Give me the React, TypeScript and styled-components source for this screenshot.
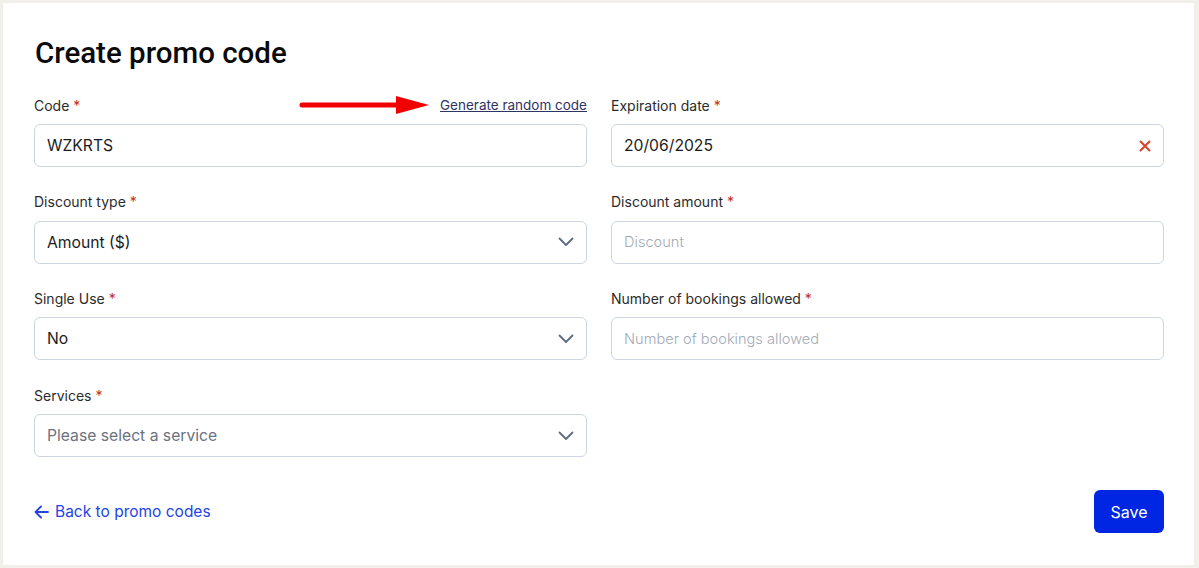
import React from "react";
import styled, { createGlobalStyle } from "styled-components";

const GlobalStyle = createGlobalStyle`
  html, body {
    margin: 0;
    padding: 0;
    background: #f0efea;
    font-family: Inter, "Noto Sans", sans-serif;
  }
  * { box-sizing: border-box; }
`;

const Page = styled.div`
  padding: 3px 5px 3px 3px;
`;

const Card = styled.div`
  background: #ffffff;
  height: 562px;
  padding: 0 30px 0 31px;
  display: flex;
  flex-direction: column;
`;

const Title = styled.h1`
  font-family: Roboto, "Liberation Sans", sans-serif;
  font-size: 29.5px;
  font-weight: 500;
  color: #0a0a0a;
  margin: 32px 0 0 1px;
  line-height: 36px;
`;

const Grid = styled.div`
  display: grid;
  grid-template-columns: 553px 553px;
  column-gap: 24px;
  row-gap: 21.7px;
  margin-top: 21px;
`;

const Field = styled.div`
  display: flex;
  flex-direction: column;
`;

const LabelRow = styled.div`
  display: flex;
  justify-content: space-between;
  align-items: center;
  height: 26px;
  margin-bottom: 6px;
`;

const Label = styled.label`
  font-size: 14px;
  color: #2b2b2b;
`;

const Star = styled.span`
  color: #c0311f;
`;

const LinkWrap = styled.div`
  display: flex;
  align-items: center;
  gap: 10px;
`;

const GenLink = styled.a`
  font-size: 13.5px;
  color: #2e3366;
  text-decoration: underline;
  cursor: pointer;
`;

const Box = styled.div<{ $placeholder?: boolean }>`
  height: 43px;
  border: 1px solid #cdd5e0;
  border-radius: 6px;
  display: flex;
  align-items: center;
  justify-content: space-between;
  padding: 0 12px;
  font-size: ${(p) => (p.$placeholder ? "14.6px" : "15.7px")};
  font-weight: ${(p) => (p.$placeholder ? 300 : 400)};
  color: ${(p) => (p.$placeholder ? "#a3aab5" : "#1c1c1c")};
`;

const SelectText = styled.span<{ $muted?: boolean }>`
  color: ${(p) => (p.$muted ? "#6b7280" : "#1c1c1c")};
`;

const Footer = styled.div`
  display: flex;
  justify-content: space-between;
  align-items: center;
  margin-top: 33px;
`;

const BackLink = styled.a`
  display: flex;
  align-items: center;
  gap: 6px;
  font-size: 15.5px;
  color: #2344e6;
  cursor: pointer;
`;

const SaveButton = styled.button`
  height: 43px;
  width: 70px;
  border: none;
  border-radius: 6px;
  background: #0026e3;
  color: #ffffff;
  font-family: Inter, sans-serif;
  font-size: 16px;
`;

const Chevron = () => (
  <svg width="16" height="10" viewBox="0 0 16 10" fill="none">
    <path d="M1.5 1.5 L8 8 L14.5 1.5" stroke="#5d6b80" strokeWidth="1.8" strokeLinecap="round" strokeLinejoin="round" />
  </svg>
);

const Cross = () => (
  <svg width="12" height="12" viewBox="0 0 12 12">
    <path d="M1.5 1.5 L10.5 10.5 M10.5 1.5 L1.5 10.5" stroke="#d9432a" strokeWidth="2" strokeLinecap="round" />
  </svg>
);

const RedArrow = () => (
  <svg width="131" height="20" viewBox="0 0 131 20">
    <path d="M3 10 L100 10" stroke="#f20000" strokeWidth="5" strokeLinecap="round" />
    <polygon points="97,1 130,10 97,19" fill="#f20000" />
  </svg>
);

const BackArrow = () => (
  <svg width="15" height="14" viewBox="0 0 15 14" fill="none">
    <path d="M14 7 H2 M7 1.5 L1.5 7 L7 12.5" stroke="#2344e6" strokeWidth="1.8" strokeLinecap="round" strokeLinejoin="round" />
  </svg>
);

export default function App() {
  return (
    <Page>
      <GlobalStyle />
      <Card>
        <Title>Create promo code</Title>
        <Grid>
          <Field>
            <LabelRow>
              <Label>Code <Star>*</Star></Label>
              <LinkWrap>
                <RedArrow />
                <GenLink>Generate random code</GenLink>
              </LinkWrap>
            </LabelRow>
            <Box>WZKRTS</Box>
          </Field>
          <Field>
            <LabelRow>
              <Label>Expiration date <Star>*</Star></Label>
            </LabelRow>
            <Box>
              20/06/2025
              <Cross />
            </Box>
          </Field>
          <Field>
            <LabelRow>
              <Label>Discount type <Star>*</Star></Label>
            </LabelRow>
            <Box>
              <SelectText>Amount ($)</SelectText>
              <Chevron />
            </Box>
          </Field>
          <Field>
            <LabelRow>
              <Label>Discount amount <Star>*</Star></Label>
            </LabelRow>
            <Box $placeholder>Discount</Box>
          </Field>
          <Field>
            <LabelRow>
              <Label>Single Use <Star>*</Star></Label>
            </LabelRow>
            <Box>
              <SelectText>No</SelectText>
              <Chevron />
            </Box>
          </Field>
          <Field>
            <LabelRow>
              <Label>Number of bookings allowed <Star>*</Star></Label>
            </LabelRow>
            <Box $placeholder>Number of bookings allowed</Box>
          </Field>
          <Field>
            <LabelRow>
              <Label>Services <Star>*</Star></Label>
            </LabelRow>
            <Box>
              <SelectText $muted>Please select a service</SelectText>
              <Chevron />
            </Box>
          </Field>
        </Grid>
        <Footer>
          <BackLink>
            <BackArrow />
            Back to promo codes
          </BackLink>
          <SaveButton>Save</SaveButton>
        </Footer>
      </Card>
    </Page>
  );
}
